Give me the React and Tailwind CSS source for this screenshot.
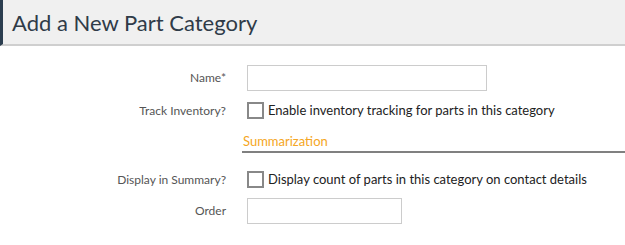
function Row({ label, children }) {
  return (
    <div className="flex items-center">
      <div className="w-[226px] shrink-0 text-right text-[12px] text-[#555]">{label}</div>
      <div className="ml-[21px] flex items-center">{children}</div>
    </div>
  );
}

function Check({ text }) {
  return (
    <label className="flex items-center gap-[4px] text-[13px] text-[#222]">
      <span className="block w-[17px] h-[17px] border-2 border-[#888] bg-white"></span>
      {text}
    </label>
  );
}

export default function App() {
  return (
    <div className="w-[625px] h-[245px] bg-white font-['Lato','Open_Sans',sans-serif]">
      <div className="h-[46px] bg-[#f0f0f0] border-l-[3px] border-[#2c3e50] border-b-2 border-b-[#cfcfcf] flex items-center pl-[9px]">
        <h1 className="text-[22px] text-[#2f3b48]">Add a New Part Category</h1>
      </div>

      <div className="pt-[19px] flex flex-col">
        <Row label="Name*">
          <input type="text" className="w-[240px] h-[26px] border border-[#ccc] bg-white" />
        </Row>
        <div className="mt-[10px]">
          <Row label="Track Inventory?">
            <Check text="Enable inventory tracking for parts in this category" />
          </Row>
        </div>
        <div className="ml-[242px] mt-[11px]">
          <div className="pl-[1px] text-[13px] text-[#f5a623]">Summarization</div>
          <div className="h-[2px] bg-[#808080]"></div>
        </div>
        <div className="mt-[17px]">
          <Row label="Display in Summary?">
            <Check text="Display count of parts in this category on contact details" />
          </Row>
        </div>
        <div className="mt-[8px]">
          <Row label="Order">
            <input type="text" className="w-[155px] h-[26px] border border-[#ccc] bg-white" />
          </Row>
        </div>
      </div>
    </div>
  );
}
